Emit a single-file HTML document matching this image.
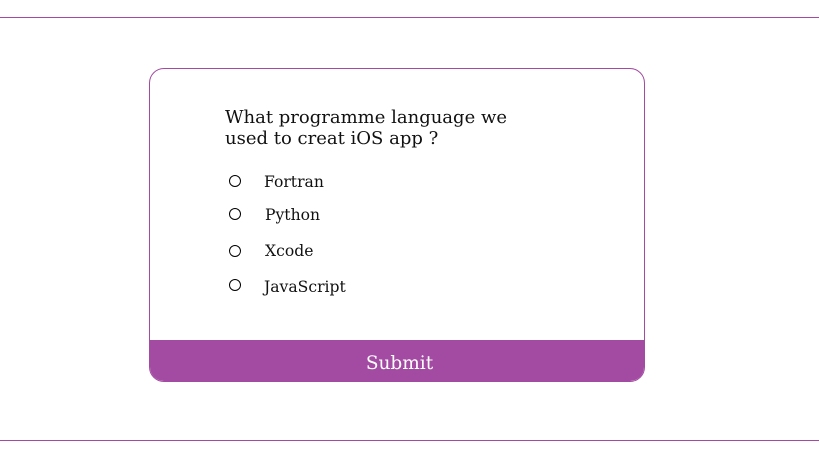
<!DOCTYPE html>
<html><head><style>
html,body{margin:0;padding:0;background:#fff;width:819px;height:460px;overflow:hidden;position:relative;font-family:"DejaVu Serif","Liberation Serif",serif;color:#111}
.line{position:absolute;left:0;width:819px;height:1px;background:#a34aa2}
.card{position:absolute;left:149px;top:68px;width:494px;height:312px;border:1px solid #a34aa2;border-radius:15px;overflow:hidden;box-sizing:content-box}
.q{position:absolute;left:75px;top:38px;font-size:18px;line-height:21px;white-space:nowrap}
.opt{position:absolute;left:79px;width:10px;height:10px;border:1px solid #000;border-radius:50%}
.lab{position:absolute;left:114px;font-size:15.6px;line-height:16px}
.btn{position:absolute;left:0;top:271px;width:494px;height:41px;background:#a34aa2;color:#fff;text-align:center;font-size:18.5px;line-height:48px;padding-left:5px;box-sizing:border-box}
</style></head><body>
<div class="line" style="top:17px"></div>
<div class="line" style="top:440px"></div>
<div class="card">
<div class="q">What programme language we<br>used to creat iOS app ?</div>
<div class="opt" style="top:106px"></div><div class="lab" style="top:105px">Fortran</div>
<div class="opt" style="top:139px"></div><div class="lab" style="top:138px;left:115px">Python</div>
<div class="opt" style="top:176px"></div><div class="lab" style="top:174px;left:115px">Xcode</div>
<div class="opt" style="top:210px"></div><div class="lab" style="top:210px">JavaScript</div>
<div class="btn">Submit</div>
</div>
</body></html>
